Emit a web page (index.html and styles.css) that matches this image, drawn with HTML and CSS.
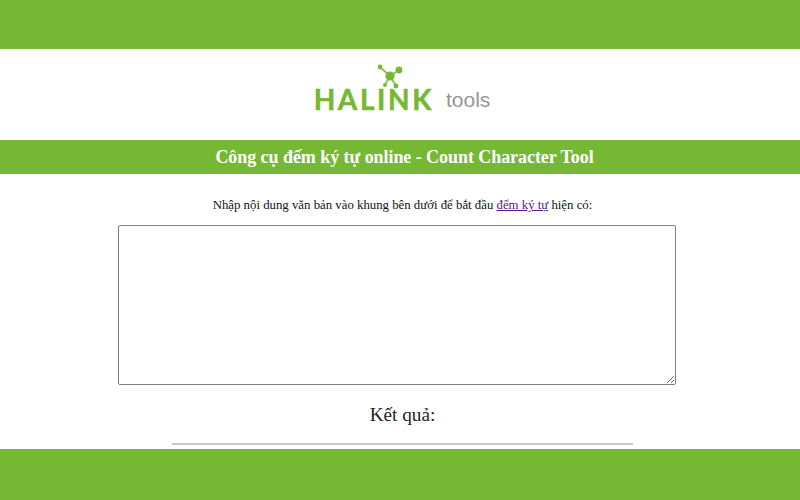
FILE: index.html
```html
<!DOCTYPE html>
<html lang="vi">
<head>
<meta charset="utf-8">
<title>Công cụ đếm ký tự online</title>
<link rel="stylesheet" href="styles.css">
</head>
<body>
<div class="top-bar"></div>
<header class="logo-area">
  <div class="logo">
    <div class="brand">
      <svg class="nodes" width="36" height="36" viewBox="0 0 36 36" aria-hidden="true">
        <g stroke="#8cc152" stroke-width="1.8">
          <line x1="6" y1="3" x2="16" y2="12"/>
          <line x1="25" y1="6" x2="16" y2="12"/>
          <line x1="16" y1="12" x2="11" y2="21"/>
          <line x1="16" y1="12" x2="22" y2="22"/>
        </g>
        <circle cx="6" cy="3" r="2.4" fill="#7ab833"/>
        <circle cx="25" cy="6" r="3.4" fill="#76b833"/>
        <circle cx="16" cy="12" r="4.6" fill="#76b833"/>
        <circle cx="22" cy="22" r="2.4" fill="#76b833"/>
        <circle cx="11" cy="21" r="2" fill="#76b833"/>
      </svg>
      <span class="brand-name">HALINK</span>
    </div>
    <span class="tools">tools</span>
  </div>
</header>
<h1 class="title">Công cụ đếm ký tự online - Count Character Tool</h1>
<main class="content">
  <p class="intro">Nhập nội dung văn bản vào khung bên dưới để bắt đầu <a href="#" class="visited">đếm ký tự</a> hiện có:</p>
  <textarea class="input" aria-label="Nội dung"></textarea>
  <h2 class="result">Kết quả:</h2>
  <hr class="rule">
</main>
<footer class="bottom-bar"></footer>
</body>
</html>
```
FILE: styles.css
```css
* { box-sizing: border-box; }
html, body { margin: 0; height: 100%; }
body {
  display: flex;
  flex-direction: column;
  overflow: hidden;
  background: #fff;
  color: #000;
  font-family: "Liberation Serif", "Times New Roman", serif;
}
.top-bar { height: 49px; flex: none; background: #76b833; }
.logo-area {
  height: 91px;
  flex: none;
  display: flex;
  justify-content: center;
  padding-top: 15px;
}
.logo { display: flex; align-items: flex-end; gap: 12px; height: 50px; padding-bottom: 2px; margin-left: 4px; }
.brand { position: relative; height: 48px; display: flex; align-items: flex-end; }
.nodes { position: absolute; left: 60px; top: 0; }
.brand-name {
  font-family: "Lato", "Liberation Sans", sans-serif;
  font-size: 28px;
  line-height: 26px;
  font-weight: 700;
  color: #76b833;
  letter-spacing: 2.6px;
  -webkit-text-stroke: 0.5px #76b833;
}
.tools {
  font-family: "Liberation Sans", Arial, sans-serif;
  font-size: 21px;
  line-height: 24px;
  color: #969696;
}
.title {
  height: 34px;
  flex: none;
  margin: 0;
  padding-left: 9px;
  background: #76b833;
  color: #fff;
  font-size: 18px;
  line-height: 34px;
  font-weight: 700;
  letter-spacing: -0.06px;
  text-align: center;
}
.content {
  flex: 1;
  min-height: 0;
  display: flex;
  flex-direction: column;
  align-items: center;
  padding-top: 23px;
}
.intro { margin: 0 0 12px 5px; font-size: 12.8px; line-height: 16px; color: #111; }
.intro a { color: #551a8b; }
.input {
  display: block;
  width: 558px;
  height: 160px;
  flex: none;
  margin: 0 0 0 -6px;
  border: 1px solid #808080;
  border-radius: 2px;
  background: #fff;
}
.result {
  margin: 18px 0 0 5px;
  font-size: 19.2px;
  line-height: 23px;
  font-weight: 400;
  color: #222;
}
.rule {
  width: 461px;
  height: 2px;
  margin: 17px 0 0 5px;
  border: 0;
  background: #c8c8c8;
  flex: none;
}
.bottom-bar { height: 51px; flex: none; background: #76b833; }
```
